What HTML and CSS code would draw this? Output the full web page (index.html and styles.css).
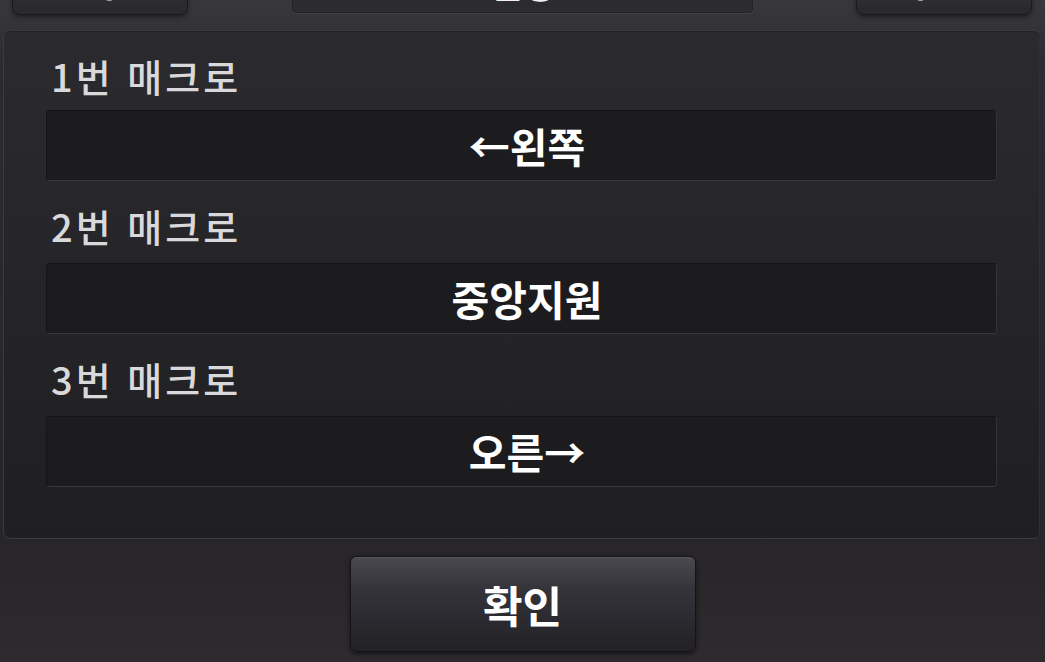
FILE: index.html
```html
<!DOCTYPE html>
<html lang="ko">
<head>
    <meta charset="UTF-8">
    <meta name="viewport" content="width=device-width, initial-scale=1.0">
    <title>매크로 설정</title>
    <link rel="stylesheet" href="styles.css">
</head>
<body>
    <div class="top-bar">
        <button class="nav-btn">&lt; 이전</button>
        <div class="title-field">설정</div>
        <button class="nav-btn">다음 &gt;</button>
    </div>

    <div class="panel">
        <div class="macro">
            <div class="macro-label">1번 매크로</div>
            <div class="macro-field">←왼쪽</div>
        </div>
        <div class="macro">
            <div class="macro-label">2번 매크로</div>
            <div class="macro-field">중앙지원</div>
        </div>
        <div class="macro">
            <div class="macro-label">3번 매크로</div>
            <div class="macro-field">오른→</div>
        </div>
    </div>

    <div class="footer">
        <button class="ok-btn">확인</button>
    </div>
</body>
</html>
```

FILE: styles.css
```css
:root {
    --text-color: #ffffff;
    --label-color: #d9d9db;
    --field-bg: #1c1b1e;
}

html, body {
    height: 100%;
}

body {
    margin: 0;
    padding: 0;
    overflow: hidden;
    font-family: "Noto Sans CJK KR", "Noto Sans", sans-serif;
    background: linear-gradient(to bottom, #38373b 0%, #2c2b2f 10%, #272529 80%, #2e2a2e 100%);
    color: var(--text-color);
}

.top-bar {
    display: flex;
    justify-content: space-between;
    align-items: flex-end;
    height: 16px;
    padding: 0 13px 0 12px;
}

.nav-btn {
    width: 176px;
    height: 60px;
    flex: none;
    margin-bottom: 1px;
    border: 1px solid #1a191c;
    border-radius: 8px;
    background: linear-gradient(to bottom, #3c3b40, #29282c);
    box-shadow: 0 2px 4px rgba(0, 0, 0, 0.45);
    color: #e8e8e8;
    font-family: inherit;
    font-size: 36px;
    font-weight: 700;
    line-height: 48px;
    padding: 0 0 8px;
    overflow: hidden;
}

.title-field {
    width: 461px;
    height: 60px;
    margin-bottom: 3px;
    border: 1px solid #232226;
    border-radius: 4px;
    background: #2c2b2f;
    box-shadow: 0 1px 0 #414045;
    color: #f0f0f0;
    font-size: 36px;
    font-weight: 700;
    line-height: 56px;
    box-sizing: border-box;
    text-align: center;
    overflow: hidden;
}

.panel {
    margin: 14px 5px 0 3px;
    height: 509px;
    box-sizing: border-box;
    padding: 0 42px;
    border: 1px solid #3b3a3f;
    border-right-color: #2f2e32;
    border-radius: 7px;
    background: linear-gradient(to bottom, #2b2a2e, #1f1e21);
    box-shadow: inset 0 1px 0 #222125;
}

.macro {
    display: flex;
    flex-direction: column;
}

.macro-label {
    height: 79px;
    box-sizing: border-box;
    padding: 21px 0 0 5px;
    font-size: 38px;
    line-height: 48px;
    letter-spacing: 3px;
    font-weight: 500;
    color: var(--label-color);
}

.macro + .macro .macro-label {
    height: 82px;
}

.macro-field {
    height: 71px;
    box-sizing: border-box;
    padding-left: 11px;
    border: 1px solid #141316;
    border-bottom-color: #3a393e;
    border-right-color: #333237;
    border-radius: 4px;
    background: var(--field-bg);
    text-align: center;
    font-size: 41px;
    font-weight: 700;
    line-height: 68px;
    color: var(--text-color);
}

.footer {
    display: flex;
    justify-content: center;
    padding-top: 17px;
}

.ok-btn {
    width: 346px;
    height: 96px;
    border: 1px solid #141316;
    border-radius: 7px;
    background: linear-gradient(to bottom, #4a4950 0%, #34333a 35%, #222125 100%);
    box-shadow: inset 0 1px 0 #5a5960, 0 2px 4px rgba(0, 0, 0, 0.5);
    color: var(--text-color);
    font-family: inherit;
    font-size: 43px;
    font-weight: 700;
    padding: 0;
}
```
